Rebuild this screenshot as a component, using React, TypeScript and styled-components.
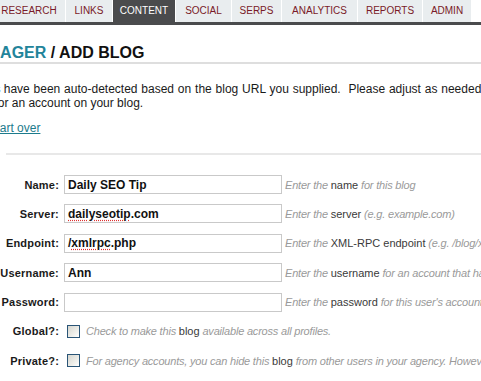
import React from "react";
import styled, { createGlobalStyle } from "styled-components";

const Global = createGlobalStyle`
  html, body { margin: 0; padding: 0; background: #fff; overflow: hidden; }
  body { font-family: "Liberation Sans", Arial, sans-serif; width: 481px; height: 381px; }
`;

const Page = styled.div`
  width: 481px;
`;

const TabBar = styled.nav`
  display: flex;
  gap: 1px;
  margin-left: -7px;
  border-bottom: 3px solid #4a4b4d;
`;

const Tab = styled.a<{ $w: number; $active?: boolean }>`
  flex: none;
  width: ${(p) => p.$w}px;
  height: 22px;
  line-height: 22px;
  text-align: center;
  font-size: 10px;
  text-transform: uppercase;
  text-decoration: none;
  white-space: nowrap;
  background: ${(p) => (p.$active ? "#4a4b4d" : "#e9edef")};
  color: ${(p) => (p.$active ? "#ffffff" : "#7a1a28")};
`;

const Content = styled.main`
  margin-left: -91px;
`;

const Heading = styled.h1`
  margin: 18px 0 0;
  padding-left: 4px;
  font-size: 16px;
  font-weight: bold;
  line-height: 19px;
  color: #111;
  border-bottom: 2px solid #dedede;
  white-space: nowrap;
`;

const Crumb = styled.span`
  color: #22849a;
`;

const Intro = styled.p`
  margin: 18px 0 0;
  font-size: 12px;
  line-height: 14px;
  color: #1a1a1a;
  white-space: nowrap;
`;

const IntroLine = styled.span`
  display: block;
`;

const Spaced = styled.span`
  word-spacing: 0.5px;
`;

const LinkLine = styled.p`
  margin: 11px 0 0;
  font-size: 12px;
  line-height: 14px;
  white-space: nowrap;
`;

const TealLink = styled.a`
  color: #1d7b8c;
  text-decoration: underline;
`;

const Rule = styled.hr`
  margin: 18px 0 0 97px;
  height: 2px;
  border: 0;
  background: #e8e8e8;
`;

const Form = styled.form`
  display: grid;
  grid-template-columns: 150px 1fr;
  grid-auto-rows: 19px;
  column-gap: 5px;
  row-gap: 10.4px;
  margin-top: 20px;
`;

const Label = styled.label`
  align-self: center;
  text-align: right;
  font-size: 11px;
  font-weight: bold;
  color: #1a1a1a;
  white-space: nowrap;
  letter-spacing: 0.2px;
`;

const Cell = styled.div`
  display: flex;
  align-items: center;
  gap: 3px;
  white-space: nowrap;
`;

const CheckCell = styled(Cell)`
  gap: 6px;
  padding-left: 3px;
`;

const FieldBox = styled.div`
  flex: none;
  box-sizing: border-box;
  width: 218px;
  height: 19px;
  border: 1px solid #c9c9c9;
  padding: 0 3px;
  display: flex;
  align-items: center;
  font-size: 12px;
  font-weight: bold;
  color: #111;
  background: #fff;
`;

const Misspelt = styled.span`
  text-decoration: underline dotted #e03030;
  text-underline-offset: 2px;
`;

const Hint = styled.span`
  font-size: 11px;
  font-style: italic;
  color: #9a9a9a;
  letter-spacing: -0.2px;
`;

const Term = styled.span`
  font-style: normal;
  color: #3a3a3a;
  letter-spacing: 0;
`;

const Check = styled.input`
  appearance: none;
  flex: none;
  margin: 0;
  width: 13px;
  height: 13px;
  box-sizing: border-box;
  border: 1px solid #2a5577;
  background: linear-gradient(135deg, #d6d6cf 0%, #f2f2ee 70%, #ffffff 100%);
`;

const tabs = [
  { label: "Research", w: 72 },
  { label: "Links", w: 46 },
  { label: "Content", w: 62, active: true },
  { label: "Social", w: 55 },
  { label: "SERPs", w: 49 },
  { label: "Analytics", w: 75 },
  { label: "Reports", w: 64 },
  { label: "Admin", w: 48 },
];

export default function App() {
  return (
    <Page>
      <Global />
      <TabBar>
        {tabs.map((t) => (
          <Tab key={t.label} href="#" $w={t.w} $active={t.active}>
            {t.label}
          </Tab>
        ))}
      </TabBar>
      <Content>
        <Heading>
          <Crumb>BLOG MANAGER</Crumb> / ADD BLOG
        </Heading>
        <Intro>
          <IntroLine>
            The blog settings{" "}
            <Spaced>
              have been auto-detected based on the blog URL you supplied.{"\u00a0"} Please adjust as needed.
            </Spaced>
          </IntroLine>
          <IntroLine>Fill login details for an account on your blog.</IntroLine>
        </Intro>
        <LinkLine>
          <TealLink href="#">« Go back and start over</TealLink>
        </LinkLine>
        <Rule />
        <Form>
          <Label>Name:</Label>
          <Cell>
            <FieldBox>Daily SEO Tip</FieldBox>
            <Hint>
              Enter the <Term>name</Term> for this blog
            </Hint>
          </Cell>

          <Label>Server:</Label>
          <Cell>
            <FieldBox>
              <Misspelt>dailyseotip</Misspelt>.com
            </FieldBox>
            <Hint>
              Enter the <Term>server</Term> (e.g. example.com)
            </Hint>
          </Cell>

          <Label>Endpoint:</Label>
          <Cell>
            <FieldBox>
              /<Misspelt>xmlrpc</Misspelt>.php
            </FieldBox>
            <Hint>
              Enter the <Term>XML-RPC endpoint</Term> (e.g. /blog/xmlrpc.php)
            </Hint>
          </Cell>

          <Label>Username:</Label>
          <Cell>
            <FieldBox>Ann</FieldBox>
            <Hint>
              Enter the <Term>username</Term> for an account that has publishing rights
            </Hint>
          </Cell>

          <Label>Password:</Label>
          <Cell>
            <FieldBox />
            <Hint>
              Enter the <Term>password</Term> for this user's account
            </Hint>
          </Cell>

          <Label>Global?:</Label>
          <CheckCell>
            <Check type="checkbox" />
            <Hint>
              Check to make this <Term>blog</Term> available across all profiles.
            </Hint>
          </CheckCell>

          <Label>Private?:</Label>
          <CheckCell>
            <Check type="checkbox" />
            <Hint>
              For agency accounts, you can hide this <Term>blog</Term> from other users in your agency. However, admins can still see it.
            </Hint>
          </CheckCell>
        </Form>
      </Content>
    </Page>
  );
}
